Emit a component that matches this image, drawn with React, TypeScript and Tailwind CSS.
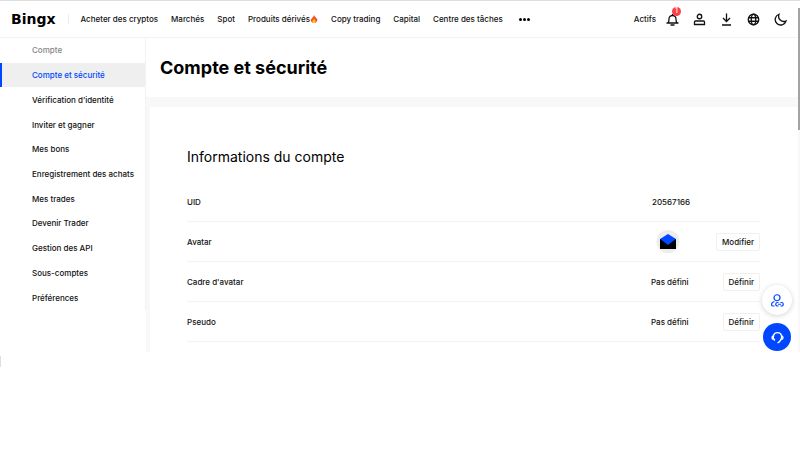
import type { ReactNode } from 'react';

const navItems = [
  'Acheter des cryptos',
  'Marchés',
  'Spot',
  'Produits dérivés',
  'Copy trading',
  'Capital',
  'Centre des tâches',
];

const sideItems = [
  'Compte et sécurité',
  'Vérification d’identité',
  'Inviter et gagner',
  'Mes bons',
  'Enregistrement des achats',
  'Mes trades',
  'Devenir Trader',
  'Gestion des API',
  'Sous-comptes',
  'Préférences',
];

function Flame() {
  return (
    <svg viewBox="0 0 16 16" className="size-2" aria-hidden="true">
      <path d="M8 0C9 3 12.500 4.500 13 8c.5-.5.8-1.200.9-2C16 11 13 16 8 16S0 11 2.500 6c.2 1.200.6 2 1.300 2.300C3.700 4.500 8 4 8 0z" fill="#f4511e" />
      <path d="M8.300 7c.2 2.500 2.900 3 2.700 5.800-.2 1.900-1.300 3.200-3 3.200s-3.200-1.300-3.200-3.200C4.800 10.500 7.500 9.500 8.300 7z" fill="#ffc928" />
    </svg>
  );
}

function HeaderIcon({ label, badge, children }: { label: string; badge?: string; children: ReactNode }) {
  return (
    <button aria-label={label} className="relative size-[13px]">
      <svg viewBox="0 0 26 26" className="size-full" fill="none" stroke="#111" strokeWidth="2.6">
        {children}
      </svg>
      {badge && (
        <span className="absolute -top-[6px] left-[6px] flex size-[9px] items-center justify-center rounded-full bg-[#fb4046] text-[7px] text-white">
          {badge}
        </span>
      )}
    </button>
  );
}

function Header() {
  return (
    <header className="flex h-[38px] items-center border-t border-b border-t-[#dedede] border-b-[#f3f3f3] pr-[13px] pl-[11px]">
      <a href="#" className="font-['DejaVu_Sans'] text-[14px] leading-4 font-bold text-black">Bingx</a>
      <div className="ml-[12px] h-[10px] w-px bg-[#ececec]" />
      <nav className="ml-[12px] flex items-center gap-[13px]">
        {navItems.map((item) => (
          <a key={item} href="#" className="flex items-center whitespace-nowrap">
            {item}
            {item === 'Produits dérivés' && <Flame />}
          </a>
        ))}
        <button aria-label="Plus" className="ml-[3px] flex gap-px">
          <span className="size-[3px] rounded-full bg-black" />
          <span className="size-[3px] rounded-full bg-black" />
          <span className="size-[3px] rounded-full bg-black" />
        </button>
      </nav>
      <div className="ml-auto flex items-center gap-[14px]">
        <a href="#" className="-mr-[4px]">Actifs</a>
        <HeaderIcon label="Notifications" badge="1">
          <path d="M1 20h24M4 20c2-2 2-4 2-8a7 7 0 0 1 14 0c0 4 0 6 2 8M9 24h8M13 5V2" />
        </HeaderIcon>
        <HeaderIcon label="Profil">
          <circle cx="13" cy="7" r="4.500" />
          <path d="M3 23v-5q0-2 2-2h16q2 0 2 2v5z" />
        </HeaderIcon>
        <HeaderIcon label="Télécharger">
          <path d="M13 1v16M6 10l7 7 7-7M4 24h18" />
        </HeaderIcon>
        <HeaderIcon label="Langue">
          <circle cx="13" cy="13" r="10.500" />
          <ellipse cx="13" cy="13" rx="4.500" ry="10.500" />
          <path d="M3 9.500h20M3 16.500h20" />
        </HeaderIcon>
        <HeaderIcon label="Mode sombre">
          <path d="M10 2.500A11 11 0 1 0 24 16 A10.500 10.500 0 0 1 10 2.500z" />
        </HeaderIcon>
      </div>
    </header>
  );
}

function Sidebar() {
  return (
    <aside className="w-[146px] shrink-0">
      <nav className="grid h-[272px] auto-rows-fr border-r border-[#f2f2f2]">
        <div className="flex items-center pl-8 text-[#858585]">Compte</div>
        {sideItems.map((item, i) => (
          <a
            key={item}
            href="#"
            className={
              i === 0
                ? 'flex items-center border-l-2 border-[#0047ff] bg-[#efefef] pl-[30px] text-[#0047ff]'
                : 'flex items-center pl-8'
            }
          >
            {item}
          </a>
        ))}
      </nav>
    </aside>
  );
}

function InfoRow({ label, value, action }: { label: string; value: ReactNode; action?: string }) {
  return (
    <div className="flex h-10 items-center border-b border-[#f3f3f3]">
      <div className="flex-1">{label}</div>
      <div className="flex w-[60px] justify-start">{value}</div>
      <div className="flex w-[49px] justify-end">
        {action && (
          <button className="h-[18px] rounded-xs border border-[#f0f0f0] px-[5px]">{action}</button>
        )}
      </div>
    </div>
  );
}

function Avatar() {
  return (
    <svg viewBox="0 0 24 24" className="ml-[5px] size-6" role="img" aria-label="Avatar">
      <circle cx="12" cy="11.500" r="11.500" fill="#ededed" />
      <path d="M4 9h16v10H4z" fill="#000" />
      <path d="M4 9l8-5 8 5-8 6z" fill="#0047ff" />
    </svg>
  );
}

export default function App() {
  return (
    <div className="min-h-screen bg-white font-['Inter',sans-serif] text-[8px] leading-3 font-medium text-[#111]">
      <div className="relative">
        <Header />
        <div className="flex">
          <Sidebar />
          <main className="min-w-0 flex-1 bg-[#f8f8f8] pr-[2px]">
            <div className="flex h-[59px] items-center bg-white pl-[14px]">
              <h1 className="text-[18px] leading-6 font-bold text-black">Compte et sécurité</h1>
            </div>
            <section className="mt-[10px] ml-[4px] bg-white pt-[40px] pr-[38px] pb-[10px] pl-[37px]">
              <h2 className="mb-[15px] text-[14px] leading-5 font-normal text-black">Informations du compte</h2>
              <InfoRow label="UID" value={<span className="ml-px">20567166</span>} />
              <InfoRow label="Avatar" value={<Avatar />} action="Modifier" />
              <InfoRow label="Cadre d'avatar" value="Pas défini" action="Définir" />
              <InfoRow label="Pseudo" value="Pas défini" action="Définir" />
            </section>
          </main>
        </div>
        <div className="absolute top-2 right-0 h-[122px] w-[2px] bg-[#a3a3a3]" />
        <div className="absolute right-[8px] bottom-px flex flex-col items-center gap-[8px]">
          <button aria-label="Parrainage" className="flex size-[30px] items-center justify-center rounded-full bg-white shadow-[0_1px_5px_rgba(0,0,0,0.18)]">
            <svg viewBox="0 0 26 26" className="size-[13px]" fill="none" stroke="#0047ff" strokeWidth="2.400">
              <circle cx="12" cy="7.500" r="6" />
              <path d="M7 15c-4 1-6 3-6 6 0 2 1 3 3 3h3" />
              <path d="M15 24h-2a3.500 3.500 0 0 1 0-7h2M19 17h2a3.500 3.500 0 0 1 0 7h-2M14 20.500h6" />
            </svg>
          </button>
          <button aria-label="Assistance" className="flex size-[28px] items-center justify-center rounded-full bg-[#0047ff]">
            <svg viewBox="0 0 26 26" className="size-[13px]" fill="none" stroke="#fff" strokeWidth="2.600">
              <path d="M8 19C4 16 4 12 5 9a8.500 8.500 0 0 1 16 0c1 4 0 8-3 11-1.500 2-3 3-5 4" />
              <path d="M5 10c-4 1-4 6 0 7M21 10c4 1 4 6 0 7" />
            </svg>
          </button>
        </div>
      </div>
      <div className="mt-[4px] h-[11px] w-px bg-[#dedede]" />
    </div>
  );
}
